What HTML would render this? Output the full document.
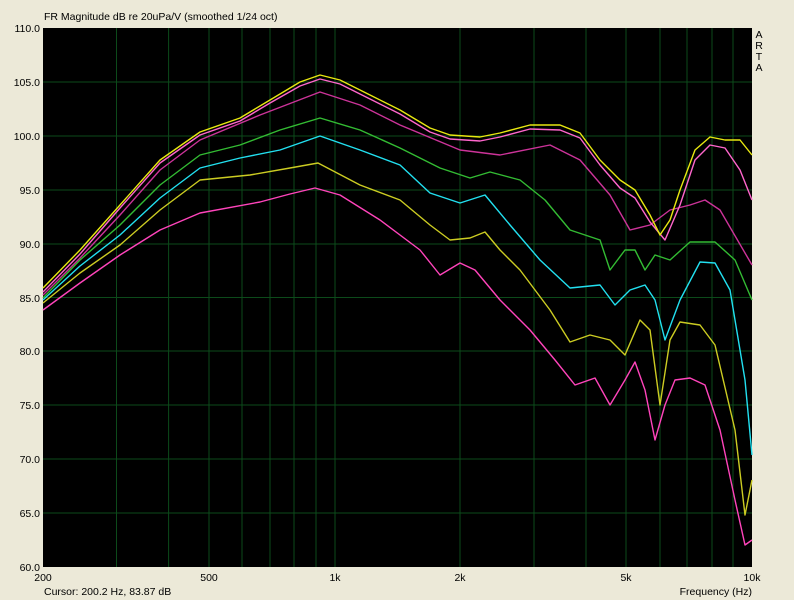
<!DOCTYPE html>
<html><head><meta charset="utf-8"><style>
html,body{margin:0;padding:0;background:#ece9d8;}
body{width:794px;height:600px;overflow:hidden;position:relative;font-family:"Liberation Sans",sans-serif;}
</style></head><body>
<svg width="794" height="600" xmlns="http://www.w3.org/2000/svg" style="position:absolute;left:0;top:0">
<rect x="0" y="0" width="794" height="600" fill="#ece9d8"/>
<rect x="43" y="28" width="709" height="539" fill="#000"/>
<g stroke="#0c4a1a" stroke-width="1">
<line x1="116.5" y1="28" x2="116.5" y2="567"/><line x1="168.6" y1="28" x2="168.6" y2="567"/>
<line x1="209" y1="28" x2="209" y2="567"/><line x1="242" y1="28" x2="242" y2="567"/>
<line x1="270" y1="28" x2="270" y2="567"/><line x1="294" y1="28" x2="294" y2="567"/>
<line x1="316" y1="28" x2="316" y2="567"/><line x1="335" y1="28" x2="335" y2="567"/>
<line x1="460" y1="28" x2="460" y2="567"/><line x1="534" y1="28" x2="534" y2="567"/>
<line x1="586" y1="28" x2="586" y2="567"/><line x1="626" y1="28" x2="626" y2="567"/>
<line x1="660" y1="28" x2="660" y2="567"/><line x1="687" y1="28" x2="687" y2="567"/>
<line x1="712" y1="28" x2="712" y2="567"/><line x1="733" y1="28" x2="733" y2="567"/>
<line x1="43" y1="82" x2="752" y2="82"/><line x1="43" y1="136" x2="752" y2="136"/>
<line x1="43" y1="190" x2="752" y2="190"/><line x1="43" y1="244" x2="752" y2="244"/>
<line x1="43" y1="297.5" x2="752" y2="297.5"/><line x1="43" y1="351" x2="752" y2="351"/>
<line x1="43" y1="405" x2="752" y2="405"/><line x1="43" y1="459" x2="752" y2="459"/>
<line x1="43" y1="513" x2="752" y2="513"/>
</g>
<g fill="none" stroke-width="1.4" stroke-linejoin="round">
<polyline stroke="#ff44bb" points="43,310 80,283 120,255 160,230 200,213 260,202 290,194 315,188 340,195 380,220 420,250 440,275 460,263 475,270 500,300 530,330 555,360 575,385 595,378 610,405 625,380 635,362 645,390 655,440 665,405 675,380 690,378 705,385 720,430 735,500 745,545 752,540"/>
<polyline stroke="#cccc22" points="43,303 80,273 120,245 160,210 200,180 250,175 290,168 318,163 360,185 400,200 430,225 450,240 470,238 485,232 500,250 520,270 550,310 570,342 590,335 610,340 625,355 640,320 650,330 660,405 670,340 680,322 700,325 715,345 735,430 745,515 752,480"/>
<polyline stroke="#22e0f0" points="43,300 80,266 120,235 160,198 200,168 240,158 280,150 320,136 360,150 400,165 430,193 460,203 485,195 510,225 540,260 570,288 600,285 615,305 630,290 645,285 655,300 665,340 680,300 700,262 715,263 730,290 745,380 752,455"/>
<polyline stroke="#33bb33" points="43,298 80,260 120,225 160,185 200,155 240,145 280,130 320,118 360,130 400,148 440,168 470,178 490,172 520,180 545,200 570,230 600,240 610,270 625,250 635,250 645,270 655,255 670,260 690,242 715,242 735,260 752,300"/>
<polyline stroke="#cc3399" points="43,295 80,258 120,215 160,170 200,140 260,115 320,92 360,105 400,125 460,150 500,155 550,145 580,160 610,195 630,230 650,225 670,210 690,205 705,200 720,210 752,265"/>
<polyline stroke="#ff66cc" points="43,292 80,254 120,208 160,163 200,135 240,121 270,103 300,86 320,79 340,84 370,99 400,114 430,132 450,139 480,141 500,137 530,129 560,130 580,138 600,165 620,188 635,198 650,222 665,240 680,205 695,160 710,145 725,148 740,170 752,200"/>
<polyline stroke="#e8e810" points="43,288 80,250 120,205 160,160 200,132 240,118 270,100 300,82 320,75 340,80 370,95 400,110 430,128 450,135 480,137 500,133 530,125 560,125 580,133 600,160 620,180 635,190 650,215 660,235 670,220 680,190 695,150 710,137 725,140 740,140 752,155"/>
</g>
<g font-family="Liberation Sans, sans-serif" font-size="10.5" fill="#000">
<text x="44" y="20">FR Magnitude dB re 20uPa/V (smoothed 1/24 oct)</text>
<g text-anchor="end">
<text x="40" y="32">110.0</text><text x="40" y="86">105.0</text><text x="40" y="140">100.0</text>
<text x="40" y="194">95.0</text><text x="40" y="248">90.0</text><text x="40" y="302">85.0</text>
<text x="40" y="355">80.0</text><text x="40" y="409">75.0</text><text x="40" y="463">70.0</text>
<text x="40" y="517">65.0</text><text x="40" y="571">60.0</text>
</g>
<g text-anchor="middle">
<text x="43" y="581">200</text><text x="209" y="581">500</text><text x="335" y="581">1k</text>
<text x="460" y="581">2k</text><text x="626" y="581">5k</text><text x="752" y="581">10k</text>
</g>
<text x="44" y="595">Cursor: 200.2 Hz, 83.87 dB</text>
<text x="752" y="595" text-anchor="end">Frequency (Hz)</text>
<g text-anchor="middle"><text x="759" y="38">A</text><text x="759" y="49">R</text><text x="759" y="60">T</text><text x="759" y="71">A</text></g>
</g>
</svg>
</body></html>
